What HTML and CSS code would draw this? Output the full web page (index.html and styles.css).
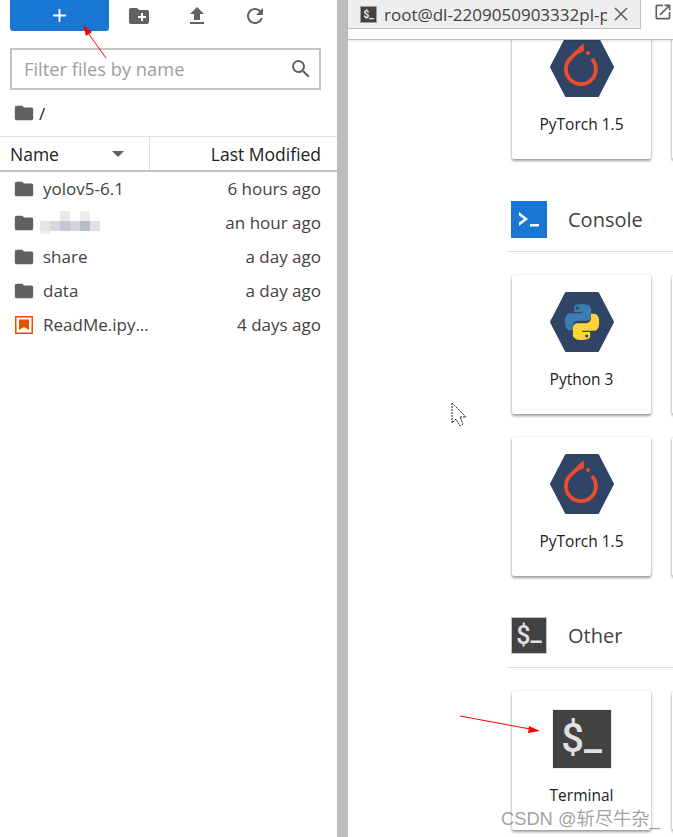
FILE: index.html
```html
<!DOCTYPE html>
<html lang="en">
<head>
<meta charset="utf-8">
<title>JupyterLab</title>
<link rel="stylesheet" href="styles.css">
</head>
<body>
<div class="app">
  <aside class="sidebar">
    <div class="toolbar">
      <button class="new-btn">
        <svg class="plus" viewBox="0 0 14 14"><path d="M6 0h2v6h6v2H8v6H6V8H0V6h6z"/></svg>
      </button>
      <div class="tools">
        <svg class="tool" viewBox="0 0 24 24"><path d="M20 6h-8l-2-2H4c-1.11 0-1.99.89-1.99 2L2 18c0 1.11.89 2 2 2h16c1.11 0 2-.89 2-2V8c0-1.11-.89-2-2-2zm-1 8h-3v3h-2v-3h-3v-2h3V9h2v3h3v2z"/></svg>
        <svg class="tool" viewBox="0 0 24 24"><path d="M9 16h6v-6h4l-7-7-7 7h4zm-4 2h14v2H5z"/></svg>
        <svg class="tool" viewBox="0 0 24 24"><path d="M17.65 6.35C16.2 4.9 14.21 4 12 4c-4.42 0-7.99 3.58-7.99 8s3.57 8 7.99 8c3.73 0 6.84-2.55 7.73-6h-2.08c-.82 2.33-3.04 4-5.65 4-3.31 0-6-2.69-6-6s2.69-6 6-6c1.66 0 3.14.69 4.22 1.78L13 11h7V4l-2.35 2.35z"/></svg>
      </div>
    </div>
    <div class="filter">
      <span class="filter-text">Filter files by name</span>
      <svg class="search" viewBox="0 0 24 24"><path d="M15.5 14h-.79l-.28-.27A6.47 6.47 0 0 0 16 9.5 6.5 6.5 0 1 0 9.5 16c1.61 0 3.09-.59 4.23-1.57l.27.28v.79l5 4.99L20.49 19l-4.99-5zm-6 0C7.01 14 5 11.99 5 9.5S7.01 5 9.5 5 14 7.01 14 9.5 11.99 14 9.5 14z"/></svg>
    </div>
    <div class="crumbs">
      <svg class="folder" viewBox="0 0 24 24"><path d="M10 4H4c-1.1 0-2 .9-2 2v12c0 1.1.9 2 2 2h16c1.1 0 2-.9 2-2V8c0-1.1-.9-2-2-2h-8l-2-2z"/></svg>
      <span class="slash">/</span>
    </div>
    <div class="list-head">
      <div class="head-name"><span>Name</span><span class="caret"></span></div>
      <div class="head-mod">Last Modified</div>
    </div>
    <ul class="files">
      <li class="file">
        <svg class="folder" viewBox="0 0 24 24"><path d="M10 4H4c-1.1 0-2 .9-2 2v12c0 1.1.9 2 2 2h16c1.1 0 2-.9 2-2V8c0-1.1-.9-2-2-2h-8l-2-2z"/></svg>
        <span class="fname">yolov5-6.1</span><span class="ftime">6 hours ago</span>
      </li>
      <li class="file">
        <svg class="folder" viewBox="0 0 24 24"><path d="M10 4H4c-1.1 0-2 .9-2 2v12c0 1.1.9 2 2 2h16c1.1 0 2-.9 2-2V8c0-1.1-.9-2-2-2h-8l-2-2z"/></svg>
        <span class="fname"><span class="blurred"></span></span><span class="ftime">an hour ago</span>
      </li>
      <li class="file">
        <svg class="folder" viewBox="0 0 24 24"><path d="M10 4H4c-1.1 0-2 .9-2 2v12c0 1.1.9 2 2 2h16c1.1 0 2-.9 2-2V8c0-1.1-.9-2-2-2h-8l-2-2z"/></svg>
        <span class="fname">share</span><span class="ftime">a day ago</span>
      </li>
      <li class="file">
        <svg class="folder" viewBox="0 0 24 24"><path d="M10 4H4c-1.1 0-2 .9-2 2v12c0 1.1.9 2 2 2h16c1.1 0 2-.9 2-2V8c0-1.1-.9-2-2-2h-8l-2-2z"/></svg>
        <span class="fname">data</span><span class="ftime">a day ago</span>
      </li>
      <li class="file">
        <svg class="nb" viewBox="0 0 18 18"><path fill-rule="evenodd" d="M0 0h18v18H0zM1.500 1.500v15h15v-15z"/><path d="M4 3.500h10v10.500l-5-3-5 3z"/></svg>
        <span class="fname">ReadMe.ipy...</span><span class="ftime">4 days ago</span>
      </li>
    </ul>
  </aside>
  <div class="splitter"></div>
  <main class="main">
    <div class="tabbar">
      <div class="tab">
        <span class="tab-icon">$_</span>
        <span class="tab-title">root@dl-2209050903332pl-pytorch</span>
        <svg class="tab-close" viewBox="0 0 14 14"><path d="M1 1l12 12M13 1L1 13"/></svg>
      </div>
      <svg class="open-ext" viewBox="0 0 24 24"><path d="M19 19H5V5h7V3H5c-1.11 0-2 .9-2 2v14c0 1.100.89 2 2 2h14c1.100 0 2-.9 2-2v-7h-2v7zM14 3v2h3.590l-9.830 9.830 1.410 1.410L19 6.410V10h2V3h-7z"/></svg>
    </div>
    <div class="launcher">
      <div class="launcher-body">
        <div class="cards">
          <div class="card">
            <svg class="kernel" viewBox="-2 -2 68 64"><path class="hex" d="M16 1h32l15 29-15 29H16L1 30z"/><path class="torch" d="M42 22A15 15 0 1 1 20.500 21.300L33 9"/><path class="torch-fill" d="M33.500 6L34 14l-8 4z"/><circle class="torch-fill" cx="38" cy="16" r="2"/></svg>
            <span class="card-label">PyTorch 1.5</span>
          </div>
          <div class="card"></div>
        </div>
        <div class="section">
          <div class="section-icon console"><svg viewBox="0 0 36 36"><path d="M8 11l9 7-9 7v-3.500l5-3.500-5-3.500z"/><rect x="19" y="23" width="9" height="2.500"/></svg></div>
          <span class="section-title">Console</span>
        </div>
        <div class="cards">
          <div class="card">
            <svg class="kernel" viewBox="-2 -2 68 64"><path class="hex" d="M16 1h32l15 29-15 29H16L1 30z"/><g transform="translate(11.400 9.400) scale(1.720)"><path class="py-blue" fill-rule="evenodd" d="M12 1.500c-5 0-4.700 2.200-4.700 2.200v2.500H12v.7H5.400S2 6.600 2 11.800s3 5 3 5h1.800v-2.500s-.1-3 2.900-3h4.800s2.800 0 2.800-2.700V4.200S17 1.500 12 1.500zM9.300 3a.9.9 0 1 1 0 1.800.9.9 0 0 1 0-1.800z"/><path class="py-yellow" fill-rule="evenodd" transform="rotate(180 12 12)" d="M12 1.500c-5 0-4.700 2.200-4.700 2.200v2.500H12v.7H5.400S2 6.600 2 11.800s3 5 3 5h1.800v-2.500s-.1-3 2.900-3h4.800s2.800 0 2.800-2.700V4.200S17 1.500 12 1.500zM9.300 3a.9.9 0 1 1 0 1.800.9.9 0 0 1 0-1.800z"/></g></svg>
            <span class="card-label">Python 3</span>
          </div>
          <div class="card"></div>
          <div class="card">
            <svg class="kernel" viewBox="-2 -2 68 64"><path class="hex" d="M16 1h32l15 29-15 29H16L1 30z"/><path class="torch" d="M42 22A15 15 0 1 1 20.500 21.300L33 9"/><path class="torch-fill" d="M33.500 6L34 14l-8 4z"/><circle class="torch-fill" cx="38" cy="16" r="2"/></svg>
            <span class="card-label">PyTorch 1.5</span>
          </div>
          <div class="card"></div>
        </div>
        <div class="section section-other">
          <div class="section-icon other"><span class="prompt small">$<span class="under">_</span></span></div>
          <span class="section-title">Other</span>
        </div>
        <div class="cards">
          <div class="card">
            <div class="term-icon"><span class="prompt">$<span class="under">_</span></span></div>
            <span class="card-label">Terminal</span>
          </div>
          <div class="card"></div>
        </div>
      </div>
    </div>
  </main>
</div>
<svg class="overlay" viewBox="0 0 673 837">
  <path class="arrow-line" d="M106 58L88 33"/><path class="arrow-head" d="M83 25l9 7-6 4z"/>
  <path class="arrow-line" d="M460 716L530 729"/><path class="arrow-head" d="M540 731l-11-5-1 7z"/>
  <path class="pointer" d="M452 403v20l4-4 4 7 3-2-3-7h6z"/>
</svg>
<div class="watermark">CSDN @斩尽牛杂_</div>
</body>
</html>
```
FILE: styles.css
```css
* { box-sizing: border-box; }
html, body { margin: 0; height: 100%; overflow: hidden; background: #fff; }
body { font-family: "Open Sans", "Noto Sans", sans-serif; color: #212121; position: relative; }
.app { display: flex; height: 837px; }
.sidebar { width: 337px; flex: none; display: flex; flex-direction: column; }
.toolbar { display: flex; padding-left: 10px; height: 31px; }
.new-btn { width: 99px; height: 31px; border: 0; padding: 0; background: #1976d2; border-radius: 0 0 3px 3px; display: flex; align-items: center; justify-content: center; }
.plus { width: 13px; height: 13px; fill: #fff; }
.tools { display: flex; gap: 34px; padding: 4px 0 0 18px; }
.tool { width: 24px; height: 24px; fill: #616161; }
.filter { margin: 17px 16px 0 10px; height: 42px; border: 2px solid #c4c4c4; display: flex; align-items: center; justify-content: space-between; padding: 0 6px 0 12px; }
.filter-text { font-size: 18.300px; color: #9e9e9e; padding-bottom: 2px; }
.search { width: 24px; height: 24px; fill: #616161; }
.crumbs { height: 46px; padding-left: 13px; display: flex; align-items: center; gap: 4px; }
.folder { width: 22px; height: 22px; fill: #616161; flex: none; }
.slash { font-size: 17px; }
.list-head { height: 36px; border-top: 1px solid #e0e0e0; border-bottom: 2px solid #c4c4c4; display: flex; font-size: 17.500px; font-weight: 500; }
.head-name { width: 150px; border-right: 1px solid #e0e0e0; padding: 1px 12px 0 10px; display: flex; align-items: center; justify-content: space-between; }
.caret { width: 0; height: 0; border: 6px solid transparent; border-top: 6px solid #616161; border-bottom: 0; margin-right: 13px; }
.head-mod { flex: 1; text-align: right; padding-right: 16px; line-height: 35px; }
.files { list-style: none; margin: 0; padding: 0; }
.file { height: 34px; display: flex; align-items: center; padding: 0 16px 0 13px; font-size: 17px; color: #424242; }
.fname { margin-left: 8px; flex: 1; padding-bottom: 2px; }
.ftime { text-align: right; padding-bottom: 2px; }
.nb { width: 18px; height: 18px; fill: #e65100; margin-left: 2px; margin-right: 2px; flex: none; }
.blurred { display: block; width: 60px; height: 23px; margin-left: -3px; background:
  linear-gradient(#e9e9ec, #e9e9ec) 20px 0/10px 10px no-repeat,
  linear-gradient(#eeeeef, #eeeeef) 40px 0/10px 10px no-repeat,
  linear-gradient(#ececec, #ececec) 0 20px/10px 3px no-repeat,
  linear-gradient(90deg, #e5e5e5 0 10px, #d8d8d8 10px 20px, #c4c8d2 20px 30px, #d4d4da 30px 40px, #b8bcc4 40px 50px, #e2e0e4 50px 60px) 0 10px/60px 10px no-repeat; }
.splitter { width: 11px; flex: none; background: #bdbdbd; }
.main { flex: 1; min-width: 0; display: flex; flex-direction: column; }
.tabbar { height: 40px; flex: none; border-bottom: 1px solid #bdbdbd; box-shadow: 0 1px 2px rgba(0,0,0,.12); display: flex; position: relative; z-index: 1; background: #fff; }
.tab { width: 295px; height: 29px; background: #eee; border-right: 1px solid #bdbdbd; border-bottom: 1px solid #bdbdbd; display: flex; align-items: center; padding-left: 12px; }
.tab-icon { width: 17px; height: 17px; background: #424242; color: #eee; border: 1px solid #9e9e9e; font: 700 10px/15px "Roboto", sans-serif; text-align: center; flex: none; }
.tab-title { width: 223px; margin-left: 7px; white-space: nowrap; overflow: hidden; font-size: 17px; color: #424242; flex: none; }
.tab-close { width: 14px; height: 14px; margin-left: 7px; fill: none; stroke: #616161; stroke-width: 1.600; flex: none; }
.open-ext { width: 20px; height: 20px; margin: 2px 0 0 12px; fill: #616161; }
.launcher { flex: 1; overflow: hidden; padding-left: 159px; }
.launcher-body { margin-top: -20px; width: 400px; }
.cards { display: grid; grid-template-columns: repeat(2, 139px); gap: 22.500px 21px; padding-left: 5px; }
.card { height: 139px; background: #fff; border-radius: 2px; box-shadow: 0 2px 3px rgba(0,0,0,.38), 0 0 2px rgba(0,0,0,.16); display: flex; flex-direction: column; align-items: center; padding-top: 15px; }
.kernel { width: 68px; height: 64px; flex: none; }
.hex { fill: #304466; stroke: #304466; stroke-width: 2; stroke-linejoin: round; }
.torch { fill: none; stroke: #ee4c2c; stroke-width: 3.800; }
.torch-fill { fill: #ee4c2c; }
.py-blue { fill: #3d7cb0; }
.py-yellow { fill: #ffd43b; }
.card-label { margin-top: 15px; font-size: 15.500px; line-height: 20px; color: #212121; white-space: nowrap; }
.section { height: 51px; margin: 42px 0 23px; border-bottom: 1px solid #e0e0e0; display: flex; align-items: flex-start; padding-left: 4px; }
.section-other { margin-top: 41.500px; }
.section-icon { width: 36px; height: 37px; flex: none; }
.console { background: #1976d2; fill: #fff; }
.other, .term-icon { background: #424242; border: 1px solid #c4c4c4; display: flex; align-items: center; justify-content: center; }
.section-title { font-size: 20px; margin-left: 21px; line-height: 37px; color: #424242; }
.term-icon { width: 60px; height: 60px; margin: 3px 0 1px; border-color: #eee; flex: none; }
.prompt { font: 500 40px/1 "Roboto", sans-serif; color: #e0e0e0; white-space: nowrap; }
.under { position: relative; top: -3px; }
.prompt.small { font-size: 25px; }
.overlay { position: absolute; left: 0; top: 0; width: 673px; height: 837px; pointer-events: none; }
.arrow-line { stroke: #f00; stroke-width: 1; fill: none; }
.arrow-head { fill: #f00; }
.pointer { fill: #fff; stroke: #222; stroke-width: 1; stroke-dasharray: 2 1; }
.watermark { position: absolute; left: 501px; top: 807px; font: 18.300px/24px "Liberation Sans", "Noto Sans CJK SC", sans-serif; color: rgba(120,120,120,.7); white-space: nowrap; }
```
